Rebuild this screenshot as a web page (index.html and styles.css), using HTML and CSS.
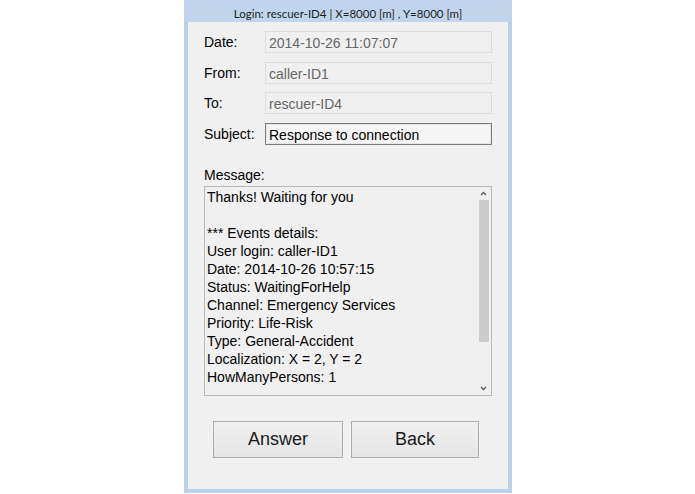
FILE: index.html
```html
<!DOCTYPE html>
<html>
<head>
<meta charset="utf-8">
<link rel="stylesheet" href="styles.css">
</head>
<body>
<div class="window">
  <div class="titlebar">Login: rescuer-ID4 | X=8000 [m] , Y=8000 [m]</div>
  <div class="client">
    <div class="row r-date"><span class="label">Date:</span><div class="field ro">2014-10-26 11:07:07</div></div>
    <div class="row r-from"><span class="label">From:</span><div class="field ro">caller-ID1</div></div>
    <div class="row r-to"><span class="label">To:</span><div class="field ro">rescuer-ID4</div></div>
    <div class="row r-subject"><span class="label">Subject:</span><div class="field edit">Response to connection</div></div>
    <div class="msg-label">Message:</div>
    <div class="memo">
      <div class="memo-text">
        <div>Thanks! Waiting for you</div>
        <div>&nbsp;</div>
        <div>*** Events details:</div>
        <div>User login: caller-ID1</div>
        <div>Date: 2014-10-26 10:57:15</div>
        <div>Status: WaitingForHelp</div>
        <div>Channel: Emergency Services</div>
        <div>Priority: Life-Risk</div>
        <div>Type: General-Accident</div>
        <div>Localization: X = 2, Y = 2</div>
        <div>HowManyPersons: 1</div>
      </div>
      <div class="scrollbar">
        <div class="arrow up"><svg width="7" height="5" viewBox="0 0 7 5"><polyline points="1,4 3.5,1.5 6,4" fill="none" stroke="#5a5a5a" stroke-width="1.3"/></svg></div>
        <div class="track"><div class="thumb"></div></div>
        <div class="arrow down"><svg width="7" height="5" viewBox="0 0 7 5"><polyline points="1,1 3.5,3.5 6,1" fill="none" stroke="#5a5a5a" stroke-width="1.3"/></svg></div>
      </div>
    </div>
    <div class="buttons">
      <button class="btn b-answer">Answer</button>
      <button class="btn b-back">Back</button>
    </div>
  </div>
</div>
</body>
</html>
```
FILE: styles.css
```css
html, body {
  margin: 0;
  padding: 0;
  background: #ffffff;
}
.window {
  margin-left: 184px;
  width: 328px;
  height: 493px;
  box-sizing: border-box;
  background: #b9d1ea;
  padding: 0 4px 4px 4px;
  display: flex;
  flex-direction: column;
}
.titlebar {
  height: 22px;
  flex: none;
  margin: 0 -4px;
  background: linear-gradient(#bdd3ea, #c2d6eb);
  text-align: center;
  font-family: "Lato", "Liberation Sans", sans-serif;
  font-size: 11.5px;
  line-height: 27px;
  overflow: hidden;
  color: #1e1e1e;
}
.client {
  flex: 1;
  background: #f0f0f0;
  padding: 9px 16px 0 16px;
  font-family: "Liberation Sans", Arial, sans-serif;
  font-size: 14px;
  color: #000000;
  display: flex;
  flex-direction: column;
}
.row {
  display: flex;
  height: 22px;
}
.r-from { margin-top: 9px; }
.r-to { margin-top: 8px; }
.r-subject { margin-top: 9px; }
.label {
  width: 61px;
  flex: none;
  line-height: 18px;
  padding-top: 2px;
}
.field {
  width: 227px;
  height: 22px;
  box-sizing: border-box;
  padding: 2px 3px 0 3px;
  line-height: 18px;
  white-space: nowrap;
}
.field.ro {
  border: 1px solid #dcdcdc;
  background: #f0f0f0;
  color: #666666;
}
.field.edit {
  border: 1px solid #7a7a7a;
  background: #f5f5f5;
  color: #000000;
  box-shadow: inset 0 0 0 1px #e6e6e6;
  padding-left: 3px;
}
.msg-label {
  margin-top: 22px;
  line-height: 16px;
  height: 16px;
  margin-bottom: 3px;
}
.memo {
  width: 288px;
  height: 210px;
  box-sizing: border-box;
  border: 1px solid #b8b8b8;
  background: #f0f0f0;
  display: flex;
}
.memo-text {
  flex: 1;
  padding: 1px 0 0 2px;
  line-height: 18px;
  white-space: nowrap;
  overflow: hidden;
}
.scrollbar {
  width: 16px;
  flex: none;
  display: flex;
  flex-direction: column;
  align-items: center;
  background: #f0f0f0;
}
.arrow {
  height: 13px;
  width: 100%;
  display: flex;
  align-items: center;
  justify-content: center;
  flex: none;
}
.arrow svg { display: block; }
.track {
  flex: 1;
  width: 100%;
  padding: 0 2px 0 4px;
  box-sizing: border-box;
}
.thumb {
  height: 142px;
  background: #cdcdcd;
}
.buttons {
  display: flex;
  gap: 8px;
  margin-top: 25px;
  margin-left: 9px;
}
.btn {
  height: 37px;
  box-sizing: border-box;
  border: 1px solid #acacac;
  background: linear-gradient(#f0f0f0, #e5e5e5);
  font-family: "Liberation Sans", Arial, sans-serif;
  font-size: 18px;
  color: #1a1a1a;
  padding: 0;
}
.b-answer { width: 130px; }
.b-back { width: 128px; }
```
